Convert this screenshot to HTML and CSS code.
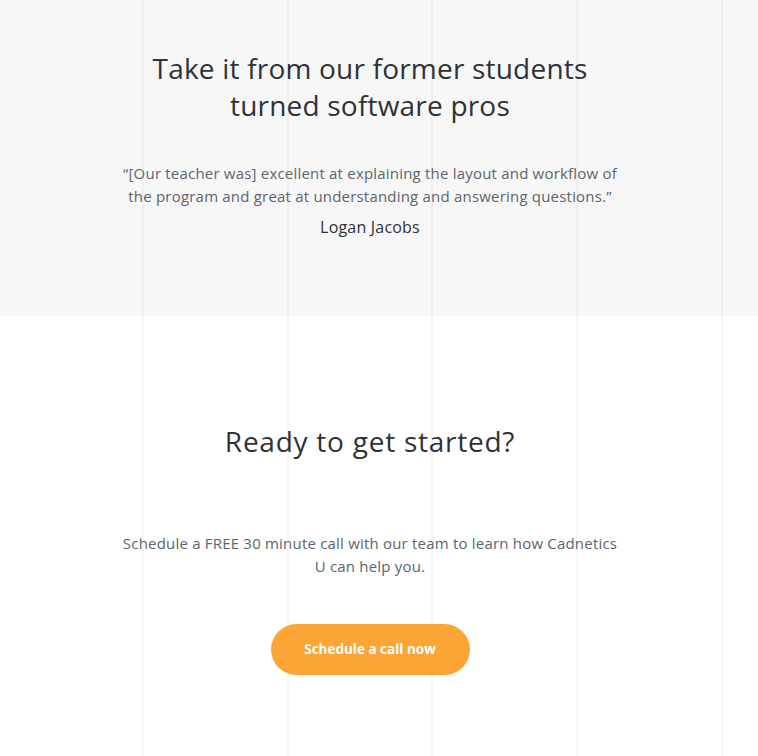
FILE: index.html
```html
<!DOCTYPE html>
<html lang="en">
<head>
<meta charset="utf-8">
<title>Cadnetics U</title>
<link rel="stylesheet" href="styles.css">
</head>
<body>
<div class="page">
  <div class="grid-lines" aria-hidden="true">
    <span class="gl gl1"></span><span class="gl gl2"></span><span class="gl gl3"></span><span class="gl gl4"></span><span class="gl gl5"></span>
  </div>
  <section class="testimonials">
    <div class="inner">
      <h2 class="title">Take it from our former students<br>turned software pros</h2>
      <p class="quote">“[Our teacher was] excellent at explaining the layout and workflow of the program and great at understanding and answering questions.”</p>
      <p class="author">Logan Jacobs</p>
    </div>
  </section>
  <section class="cta">
    <div class="inner">
      <h2 class="title title-wide">Ready to get started?</h2>
      <p class="cta-text">Schedule a FREE 30 minute call with our team to learn how Cadnetics U can help you.</p>
      <a class="btn" href="#">Schedule a call now</a>
    </div>
  </section>
</div>
</body>
</html>
```
FILE: styles.css
```css
* { box-sizing: border-box; }
html, body { margin: 0; padding: 0; background: #ffffff; }
body {
  font-family: "Open Sans", "Noto Sans", sans-serif;
  color: #333333;
  height: 756px;
  overflow: hidden;
}
.page { position: relative; width: 758px; }
.grid-lines { position: absolute; inset: 0; pointer-events: none; z-index: 1; }
.gl { position: absolute; top: 0; bottom: 0; width: 2px; background: rgba(0,0,0,0.03); }
.gl1 { left: 142px; }
.gl2 { left: 287px; }
.gl3 { left: 431px; }
.gl4 { left: 576px; }
.gl5 { left: 721px; }
.testimonials { background: #f7f7f7; height: 316px; padding-top: 50px; }
.cta { height: 440px; padding-top: 107px; }
.inner { position: relative; z-index: 2; width: 740px; display: flex; flex-direction: column; align-items: center; text-align: center; }
.title { margin: 0; font-size: 28px; font-weight: 400; line-height: 36.5px; color: #2f3236; letter-spacing: 0.2px; }
.title-wide { letter-spacing: 0.75px; }
.quote { margin: 39px 0 0; width: 506px; font-size: 15px; line-height: 23px; color: #60646b; letter-spacing: 0.2px; }
.author { margin: 7px 0 0; font-size: 16px; line-height: 24px; color: #2f3236; letter-spacing: 0.2px; }
.cta-text { margin: 72px 0 0; width: 506px; font-size: 15px; line-height: 23px; color: #60646b; letter-spacing: 0.2px; }
.btn { margin-top: 46px; display: flex; align-items: center; justify-content: center; width: 199px; height: 51px; border-radius: 26px; background: #fba537; color: #ffffff; font-size: 13.5px; font-weight: 700; text-decoration: none; }
```
